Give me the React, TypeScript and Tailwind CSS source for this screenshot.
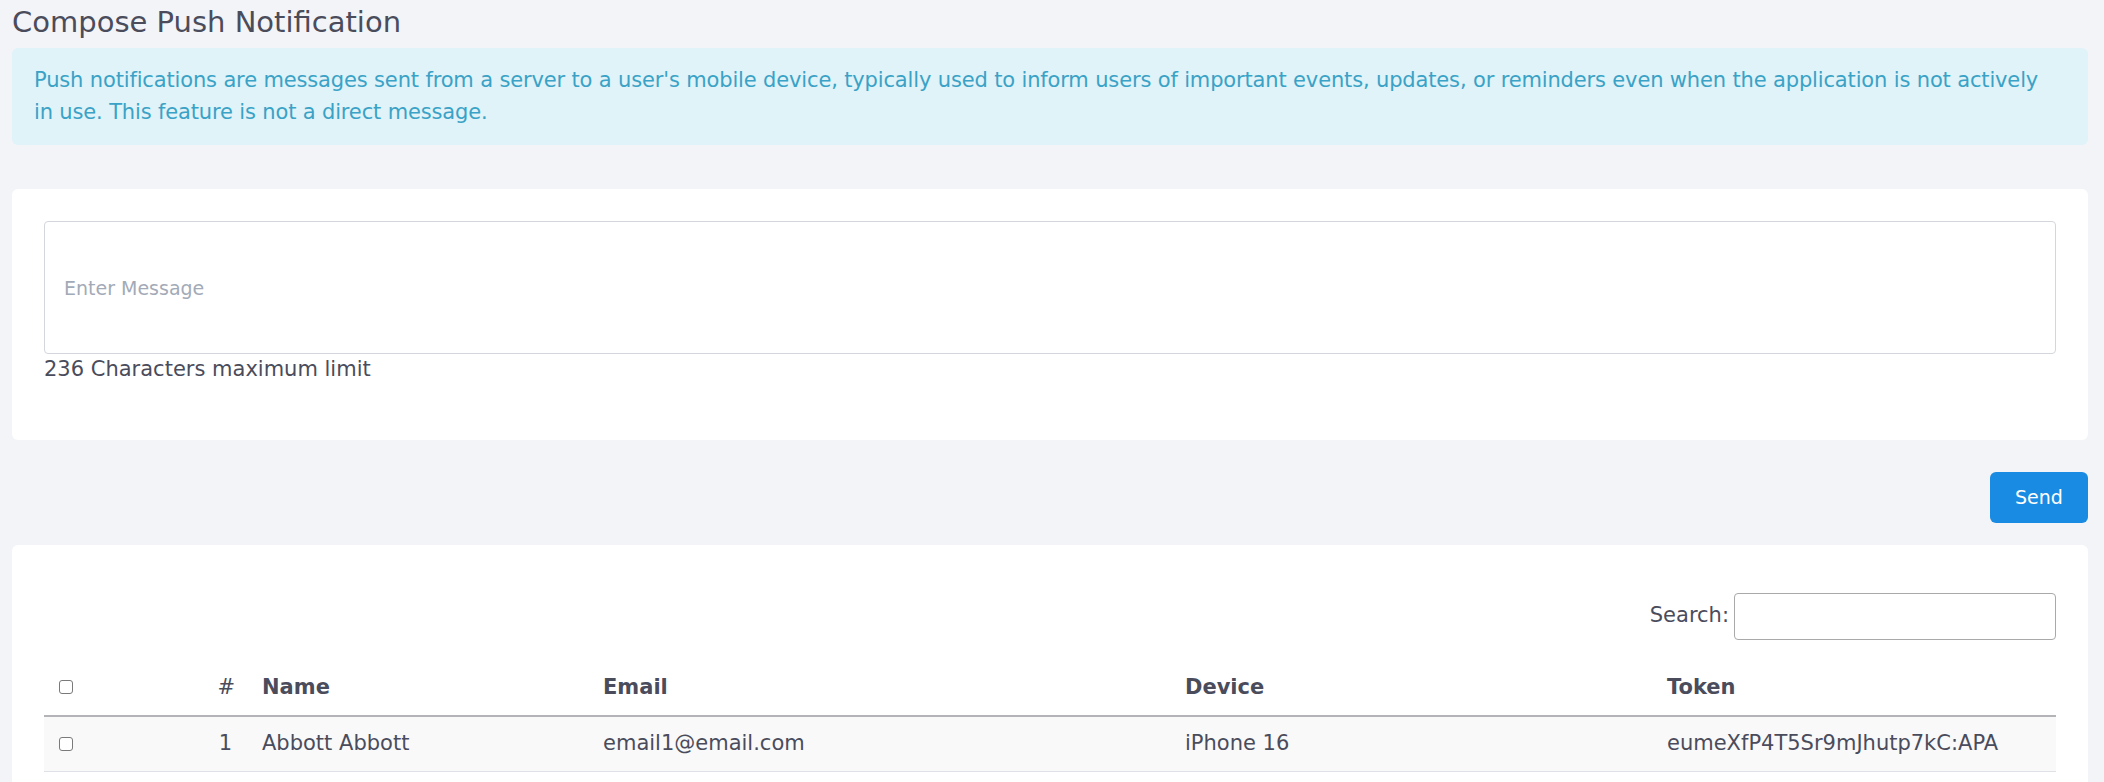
import React from 'react'

const font = { fontFamily: '"DejaVu Sans", "Liberation Sans", sans-serif' }

function Box() {
  return <span className="block w-[14px] h-[14px] rounded-[3px] border border-[#7a7a7a] bg-white" />
}

const cols = 'grid grid-cols-[106px_97px_341px_582px_482px_404px]'

export default function App() {
  return (
    <div style={font} className="min-h-[782px] w-full bg-[#f3f4f7] pl-3 pr-4 text-[#4a4c5c]">
      <h4 className="pt-[5px] mb-[9px] text-[29px] leading-[34px] font-normal text-[#4a4c5c]">
        Compose Push Notification
      </h4>

      <div className="rounded-md bg-[#dff3f9] px-[22px] py-[17px] text-[21px] leading-[31.5px] text-[#3aa2c6] tracking-[-0.15px]">
        <span className="whitespace-nowrap">
          Push notifications are messages sent from a server to a user's mobile device, typically used to inform users of important events, updates, or reminders even when the application is not actively
        </span>
        <br />
        in use. This feature is not a direct message.
      </div>

      <div className="mt-[44px] rounded-md bg-white px-8 pt-8 pb-[54px]">
        <textarea
          placeholder="Enter Message"
          className="block h-[133px] w-full resize-none rounded-[4px] border border-[#d3d6db] px-[19px] pt-[53px] text-[19px] leading-[27px] placeholder:text-[#a3aab7] outline-none"
        />
        <p className="text-[21px] leading-[31.5px] text-[#4a4c5c]">236 Characters maximum limit</p>
      </div>

      <div className="mt-8 flex justify-end">
        <button className="h-[51px] w-[98px] rounded-md bg-[#1a8be3] text-[19px] text-white">Send</button>
      </div>

      <div className="mt-[22px] rounded-t-md bg-white px-8 pt-12 pb-8">
        <div className="flex items-center justify-end gap-[5px]">
          <span className="text-[21px] text-[#4a4c5c]">Search:</span>
          <input className="h-[47px] w-[322px] rounded-[4px] border border-[#a9a9a9] bg-white outline-none" />
        </div>

        <div className="mt-5 text-[21px] leading-[31.5px]">
          <div className={`${cols} border-b-2 border-[#b4b4b8] font-semibold text-[#4a4c5c]`}>
            <div className="flex items-center pl-[15px] py-3"><Box /></div>
            <div className="text-right pr-3 py-3 font-normal">#</div>
            <div className="pl-[15px] py-3">Name</div>
            <div className="pl-[15px] py-3">Email</div>
            <div className="pl-[15px] py-3">Device</div>
            <div className="pl-[15px] py-3">Token</div>
          </div>
          <div className={`${cols} border-b border-[#dee2e6] bg-[#f9f9f9]`}>
            <div className="flex items-center pl-[15px] py-[11px]"><Box /></div>
            <div className="text-right pr-[15px] py-[11px]">1</div>
            <div className="pl-[15px] py-[11px]">Abbott Abbott</div>
            <div className="pl-[15px] py-[11px]">email1@email.com</div>
            <div className="pl-[15px] py-[11px]">iPhone 16</div>
            <div className="pl-[15px] py-[11px]">
              <span className="block w-[353px] overflow-hidden whitespace-nowrap">eumeXfP4T5Sr9mJhutp7kC:APA</span>
            </div>
          </div>
        </div>
      </div>
    </div>
  )
}
